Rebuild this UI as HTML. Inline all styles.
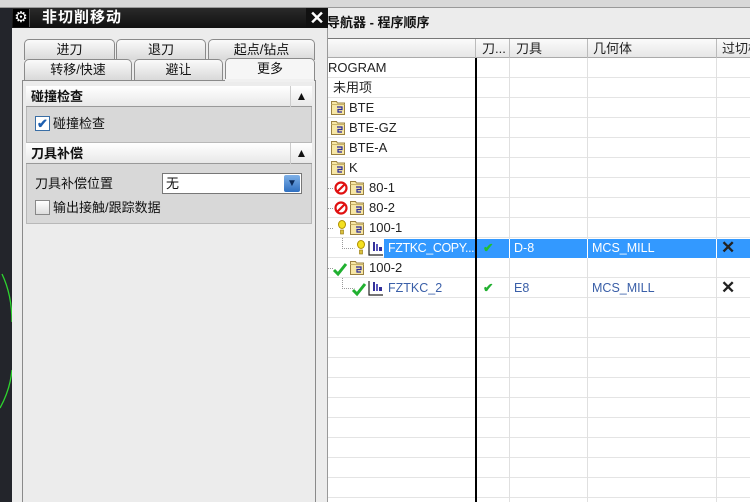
<!DOCTYPE html>
<html><head><meta charset="utf-8"><style>
*{margin:0;padding:0;box-sizing:border-box}
body{width:750px;height:502px;overflow:hidden;background:#ececec;position:relative;font-family:"Liberation Sans","Noto Sans CJK SC",sans-serif;font-size:13px;color:#111}
.a{position:absolute}
.tab{position:absolute;height:21px;border:1px solid #8a8a8a;border-bottom:none;border-radius:5px 5px 0 0;background:linear-gradient(#fafafa,#d9d9d9);text-align:center;line-height:20px;font-size:13px}
.hdr{position:absolute;left:26px;width:286px;height:21px;background:linear-gradient(#fff,#e8e8e8);border-bottom:1px solid #999;font-weight:bold;line-height:21px;padding-left:5px;font-size:13px}
.hdr .up{position:absolute;right:0;top:0;width:22px;height:21px;border-left:1px solid #ccc;text-align:center;font-size:12px}
.body{position:absolute;left:26px;width:286px;background:#d8d8d8;border:1px solid #b8b8b8;border-top:none}
.row{position:absolute;left:328px;width:422px;height:20px;border-bottom:1px solid #e4e4e4;background:#fff}
.t{position:absolute;font-family:"Liberation Sans","Noto Sans CJK SC",sans-serif;font-size:12.5px;line-height:20px;color:#222;white-space:nowrap}
.vl{position:absolute;top:58px;height:444px;width:1px;background:#e0e0e0}
.blue{color:#3a5fa8}
</style></head><body>
<div class="a" style="left:0;top:0;width:750px;height:8px;background:#d8d8d8;border-bottom:1px solid #999"></div>
<div class="a" style="left:0;top:8px;width:12px;height:494px;background:#23252b"></div>
<svg class="a" style="left:0;top:260px" width="14" height="160"><path d="M2 14 Q12 35 12 62 M12 110 Q10 130 0 148" stroke="#2ed52e" stroke-width="1.3" fill="none"/></svg>
<div class="a" style="left:12px;top:8px;width:316px;height:494px;background:#ececec;border-right:1px solid #999"></div>
<div class="a" style="left:12px;top:8px;width:316px;height:20px;background:linear-gradient(#2a2a2a,#111)"></div>
<div class="a" style="left:13px;top:9px;width:17px;height:18px;background:#000;border-right:1px solid #555;color:#fff;text-align:center;font-size:15px;line-height:18px">⚙</div>
<div class="a" style="left:42px;top:8px;color:#fff;font-weight:bold;font-size:15px;line-height:20px;letter-spacing:1px">非切削移动</div>
<div class="a" style="left:306px;top:8px;width:22px;height:20px;color:#fff;font-weight:bold;font-size:18px;line-height:20px;text-align:center;background:#111">✕</div>
<div class="tab" style="left:24px;top:39px;width:91px">进刀</div>
<div class="tab" style="left:116px;top:39px;width:90px">退刀</div>
<div class="tab" style="left:208px;top:39px;width:107px">起点/钻点</div>
<div class="tab" style="left:24px;top:59px;width:108px">转移/快速</div>
<div class="tab" style="left:134px;top:59px;width:89px">避让</div>
<div class="tab" style="left:225px;top:58px;width:90px;height:23px;background:#f6f6f6">更多</div>
<div class="a" style="left:22px;top:80px;width:294px;height:422px;border:1px solid #8a8a8a;border-bottom:none;background:#ececec"></div>
<div class="a" style="left:225px;top:79px;width:89px;height:3px;background:#f0f0f0"></div>
<div class="hdr" style="top:86px">碰撞检查<div class="up">▲</div></div>
<div class="body" style="top:107px;height:36px"></div>
<div class="a" style="left:35px;top:116px;width:15px;height:15px;border:1px solid #3a6ea5;background:#fff;color:#1d5fb0;font-size:13px;line-height:13px;text-align:center;font-weight:bold">✔</div>
<div class="a" style="left:53px;top:114px;line-height:20px">碰撞检查</div>
<div class="hdr" style="top:143px">刀具补偿<div class="up">▲</div></div>
<div class="body" style="top:164px;height:60px"></div>
<div class="a" style="left:35px;top:174px;line-height:20px">刀具补偿位置</div>
<div class="a" style="left:162px;top:173px;width:140px;height:21px;background:#fff;border:1px solid #777;line-height:19px;padding-left:3px">无</div>
<div class="a" style="left:284px;top:175px;width:16px;height:17px;background:linear-gradient(#7fb1e8,#2f6fc0);color:#0b2a5a;font-size:10px;text-align:center;line-height:17px;border-radius:2px">▼</div>
<div class="a" style="left:35px;top:200px;width:15px;height:15px;border:1px solid #888;background:linear-gradient(#fff,#ddd)"></div>
<div class="a" style="left:53px;top:198px;line-height:20px">输出接触/跟踪数据</div>
<div class="a" style="left:328px;top:8px;width:422px;height:30px;background:#ececec"></div>
<div class="a" style="left:327px;top:12px;font-weight:bold;font-size:13px;line-height:22px">导航器 - 程序顺序</div>
<div class="a" style="left:328px;top:38px;width:422px;height:20px;background:linear-gradient(#fbfbfb,#e6e6e6);border-top:1px solid #777;border-bottom:1px solid #aaa"></div>
<div class="a" style="left:475px;top:39px;width:1px;height:19px;background:#bbb"></div>
<div class="a" style="left:509px;top:39px;width:1px;height:19px;background:#bbb"></div>
<div class="a" style="left:587px;top:39px;width:1px;height:19px;background:#bbb"></div>
<div class="a" style="left:716px;top:39px;width:1px;height:19px;background:#bbb"></div>
<div class="t" style="left:482px;top:39px;font-size:13px">刀...</div>
<div class="t" style="left:516px;top:39px;font-size:13px">刀具</div>
<div class="t" style="left:593px;top:39px;font-size:13px">几何体</div>
<div class="t" style="left:722px;top:39px;font-size:13px">过切检</div>
<div class="a" style="left:328px;top:58px;width:422px;height:444px;background:#fff"></div>
<div class="row" style="top:58px"></div><div class="row" style="top:78px"></div><div class="row" style="top:98px"></div><div class="row" style="top:118px"></div><div class="row" style="top:138px"></div><div class="row" style="top:158px"></div><div class="row" style="top:178px"></div><div class="row" style="top:198px"></div><div class="row" style="top:218px"></div><div class="row" style="top:238px"></div><div class="row" style="top:258px"></div><div class="row" style="top:278px"></div><div class="row" style="top:298px"></div><div class="row" style="top:318px"></div><div class="row" style="top:338px"></div><div class="row" style="top:358px"></div><div class="row" style="top:378px"></div><div class="row" style="top:398px"></div><div class="row" style="top:418px"></div><div class="row" style="top:438px"></div><div class="row" style="top:458px"></div><div class="row" style="top:478px"></div>
<div class="vl" style="left:509px"></div><div class="vl" style="left:587px"></div><div class="vl" style="left:716px"></div>
<div class="a" style="left:476px;top:239px;width:274px;height:19px;background:#3399ff"></div>
<div class="a" style="left:384px;top:239px;width:91px;height:19px;background:#3399ff"></div>
<div class="a" style="left:509px;top:239px;width:1px;height:19px;background:#fff"></div>
<div class="a" style="left:587px;top:239px;width:1px;height:19px;background:#fff"></div>
<div class="a" style="left:716px;top:239px;width:1px;height:19px;background:#fff"></div>
<svg class="a" style="left:328px;top:58px" width="150" height="250">
<defs>
<g id="f"><path d="M0.5 1.5h5l1 1.5h7v11.5h-13z" fill="#f7e7a6" stroke="#9a8040"/><path d="M0.5 4.5h13" stroke="#c9b36a"/><path d="M6 7h5v2.5h-4v2.5h4" stroke="#2a2a9a" fill="none" stroke-width="1.2"/></g>
<g id="n"><circle cx="7" cy="7" r="5.5" fill="none" stroke="#e01010" stroke-width="2.2"/><path d="M3 11L11 3" stroke="#e01010" stroke-width="2.2"/></g>
<g id="b"><ellipse cx="5" cy="4.5" rx="3.5" ry="4" fill="#f4e020" stroke="#b09000"/><rect x="3.5" y="10" width="3" height="4" fill="#d8c040" stroke="#907000" stroke-width=".6"/></g>
<g id="c"><path d="M1 8l4 4L13 2" stroke="#20b030" stroke-width="3" fill="none"/></g>
<g id="o"><path d="M1 1v14h14" stroke="#222" fill="none" stroke-width="1.2"/><rect x="5" y="2" width="2" height="9" fill="#33309a"/><rect x="8" y="4" width="2" height="7" fill="#5a58c0"/><rect x="11" y="7" width="3" height="4" fill="#33309a"/></g>
</defs>
<use href="#f" x="3" y="42"/><use href="#f" x="3" y="62"/><use href="#f" x="3" y="82"/><use href="#f" x="3" y="102"/>
<path d="M0 130.5h5M0 150.5h5M0 170.5h5M0 210.5h5M14.5 180v10.5h12M14.5 220v10.5h12" stroke="#999" stroke-dasharray="1 1" fill="none"/>
<use href="#n" x="6" y="123"/><use href="#f" x="22" y="122"/>
<use href="#n" x="6" y="143"/><use href="#f" x="22" y="142"/>
<use href="#b" x="9" y="162"/><use href="#f" x="22" y="162"/>
<use href="#b" x="28" y="182"/><use href="#o" x="40" y="182"/>
<use href="#c" x="5" y="204"/><use href="#f" x="22" y="202"/>
<use href="#c" x="24" y="224"/><use href="#o" x="40" y="222"/>
</svg>
<div class="a" style="left:475px;top:58px;width:2px;height:444px;background:#000"></div>
<div class="t" style="left:328px;top:58px;font-size:13px">ROGRAM</div>
<div class="t" style="left:333px;top:78px;font-size:13px">未用项</div>
<div class="t" style="left:349px;top:98px;font-size:13px">BTE</div>
<div class="t" style="left:349px;top:118px;font-size:13px">BTE-GZ</div>
<div class="t" style="left:349px;top:138px;font-size:13px">BTE-A</div>
<div class="t" style="left:349px;top:158px;font-size:13px">K</div>
<div class="t" style="left:369px;top:178px;font-size:13px">80-1</div>
<div class="t" style="left:369px;top:198px;font-size:13px">80-2</div>
<div class="t" style="left:369px;top:218px;font-size:13px">100-1</div>
<div class="t" style="left:388px;top:238px;color:#fff;letter-spacing:-0.4px">FZTKC_COPY...</div>
<div class="t" style="left:369px;top:258px;font-size:13px">100-2</div>
<div class="t blue" style="left:388px;top:278px">FZTKC_2</div>
<div class="t" style="left:483px;top:238px;color:#22c030;font-weight:bold">✔</div>
<div class="t" style="left:483px;top:278px;color:#22b030;font-weight:bold">✔</div>
<div class="t" style="left:514px;top:238px;color:#fff">D-8</div>
<div class="t blue" style="left:514px;top:278px">E8</div>
<div class="t" style="left:592px;top:238px;color:#fff">MCS_MILL</div>
<div class="t blue" style="left:592px;top:278px">MCS_MILL</div>
<div class="t" style="left:721px;top:238px;font-size:17px;font-weight:bold">✕</div>
<div class="t" style="left:721px;top:278px;font-size:17px;font-weight:bold">✕</div>
</body></html>
